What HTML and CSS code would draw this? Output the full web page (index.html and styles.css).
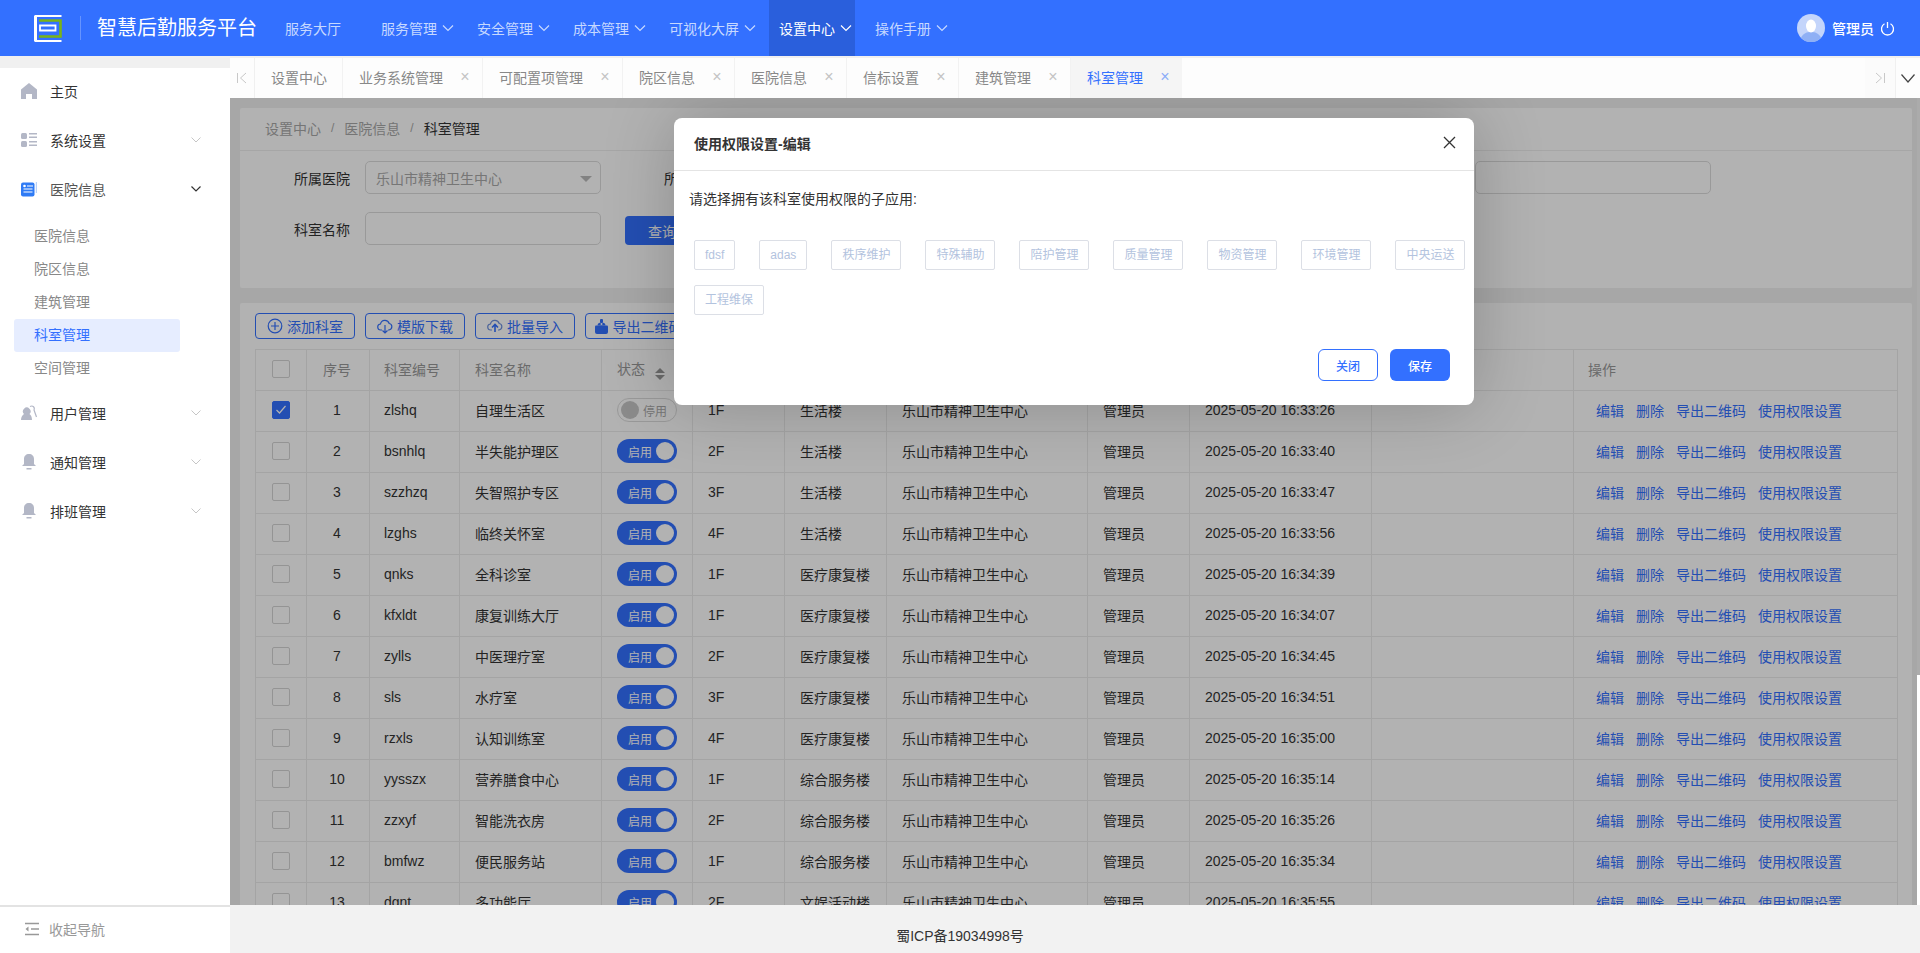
FILE: index.html
```html
<!DOCTYPE html>
<html lang="zh">
<head>
<meta charset="utf-8">
<title>智慧后勤服务平台</title>
<link rel="stylesheet" href="styles.css">
</head>
<body>
<div class="app">
  <header class="topbar">
    <div class="logo">
      <svg width="28" height="27" viewBox="0 0 28 27"><path d="M27.500 1H1.500v25h26" fill="none" stroke="#fff" stroke-width="2"/><path d="M1.500 1v25" stroke="#fff" stroke-width="3" fill="none"/><path d="M5 5.500h21.500v16H5" fill="none" stroke="#7ab317" stroke-width="2.600"/><path d="M6 10.500h15.500v5H6z" fill="none" stroke="#fff" stroke-width="1.800"/></svg>
    </div>
    <div class="brand">智慧后勤服务平台</div>
    <nav class="nav">
      <a class="nav-item solo">服务大厅</a>
      <a class="nav-item">服务管理<svg class="chev" viewBox="0 0 12 12"><path d="M1 3.500l5 5 5-5"/></svg></a>
      <a class="nav-item">安全管理<svg class="chev" viewBox="0 0 12 12"><path d="M1 3.500l5 5 5-5"/></svg></a>
      <a class="nav-item">成本管理<svg class="chev" viewBox="0 0 12 12"><path d="M1 3.500l5 5 5-5"/></svg></a>
      <a class="nav-item">可视化大屏<svg class="chev" viewBox="0 0 12 12"><path d="M1 3.500l5 5 5-5"/></svg></a>
      <a class="nav-item active">设置中心<svg class="chev" viewBox="0 0 12 12"><path d="M1 3.500l5 5 5-5"/></svg></a>
      <a class="nav-item">操作手册<svg class="chev" viewBox="0 0 12 12"><path d="M1 3.500l5 5 5-5"/></svg></a>
    </nav>
    <div class="user">
      <svg class="avatar" width="28" height="28" viewBox="0 0 28 28"><circle cx="14" cy="14" r="14" fill="#c4d5fb"/><path d="M4 24c2-5 6-6 10-6s8 1 10 6a14 14 0 0 1-20 0z" fill="#8fb0f5"/><ellipse cx="14" cy="12" rx="5" ry="6.500" fill="#fff"/></svg>
      <span class="user-name">管理员</span>
      <svg class="power" width="15" height="15" viewBox="0 0 15 15"><path d="M4.500 2.800a6 6 0 1 0 6 0M7.500 1v6" fill="none" stroke="#fff" stroke-width="1.300"/></svg>
    </div>
  </header>

  <div class="below">
    <aside class="sidebar">
      <div class="menu">
        <div class="menu-row"><svg class="m-ico" viewBox="0 0 16 16"><path d="M8 0l8 6.500V16h-5v-5H5v5H0V6.500z" fill="#b3b7c6"/></svg><span>主页</span></div>
        <div class="menu-row"><svg class="m-ico" viewBox="0 0 16 16"><g fill="#b3b7c6"><rect x="0" y="1" width="6" height="6" rx="1.500"/><rect x="0" y="9" width="6" height="6" rx="1.500"/><rect x="8" y="1" width="8" height="1.500"/><rect x="8" y="4.500" width="8" height="1.500"/><rect x="8" y="9" width="8" height="1.500"/><rect x="8" y="12.500" width="8" height="1.500"/></g></svg><span>系统设置</span><svg class="m-chev" viewBox="0 0 10 6"><path d="M.5.500L5 5 9.500.500"/></svg></div>
        <div class="menu-row open"><svg class="m-ico" viewBox="0 0 16 16"><rect x="0" y="1.500" width="13.500" height="14" rx="2" fill="#2f7bf5"/><path d="M15.300 1v11" stroke="#a8c6f7" fill="none"/><path d="M6 5h6M2.500 8h9M2.500 11h9" stroke="#fff" stroke-width="1.200" fill="none"/><circle cx="3.500" cy="5" r="1.300" fill="#fff"/></svg><span>医院信息</span><svg class="m-chev" viewBox="0 0 10 6"><path d="M.5.500L5 5 9.500.500"/></svg></div>
        <div class="submenu">
          <a class="sub">医院信息</a>
          <a class="sub">院区信息</a>
          <a class="sub">建筑管理</a>
          <a class="sub current">科室管理</a>
          <a class="sub">空间管理</a>
        </div>
        <div class="menu-row"><svg class="m-ico" viewBox="0 0 16 16"><path d="M0 15c0-3 1.500-5 3-6a3.800 3.800 0 1 1 5.500 0c1.500 1 2.500 3 2.500 6z" fill="#b3b7c6"/><path d="M9 1.500c3-1.500 5 1 4 3.500l2.500 7" fill="none" stroke="#b3b7c6" stroke-width="1.200"/></svg><span>用户管理</span><svg class="m-chev" viewBox="0 0 10 6"><path d="M.5.500L5 5 9.500.500"/></svg></div>
        <div class="menu-row"><svg class="m-ico" viewBox="0 0 16 16"><path d="M8 0c3 0 5 2 5 5v5l2 2H1l2-2V5c0-3 2-5 5-5z" fill="#b3b7c6"/><rect x="5.500" y="14" width="5" height="1.500" fill="#b3b7c6"/></svg><span>通知管理</span><svg class="m-chev" viewBox="0 0 10 6"><path d="M.5.500L5 5 9.500.500"/></svg></div>
        <div class="menu-row"><svg class="m-ico" viewBox="0 0 16 16"><path d="M8 0c3 0 5 2 5 5v5l2 2H1l2-2V5c0-3 2-5 5-5z" fill="#b3b7c6"/><rect x="5.500" y="14" width="5" height="1.500" fill="#b3b7c6"/></svg><span>排班管理</span><svg class="m-chev" viewBox="0 0 10 6"><path d="M.5.500L5 5 9.500.500"/></svg></div>
      </div>
      <div class="collapse">
        <svg width="16" height="14" viewBox="0 0 16 14"><path d="M1 1.500h14M7 7h8M1 12.500h14" stroke="#999" stroke-width="1.500" fill="none"/><path d="M4.500 4.500L1.500 7l3 2.500z" fill="#999"/></svg>
        <span>收起导航</span>
      </div>
    </aside>

    <main class="main">
      <div class="tabs">
        <div class="tab-btn first"><svg width="12" height="12" viewBox="0 0 12 12"><path d="M1.500 1v10M10 1L4.500 6l5.500 5" fill="none" stroke="#c8c8c8"/></svg></div>
        <a class="tab">设置中心</a>
        <a class="tab">业务系统管理<i class="x">×</i></a>
        <a class="tab">可配置项管理<i class="x">×</i></a>
        <a class="tab">院区信息<i class="x">×</i></a>
        <a class="tab">医院信息<i class="x">×</i></a>
        <a class="tab">信标设置<i class="x">×</i></a>
        <a class="tab">建筑管理<i class="x">×</i></a>
        <a class="tab on">科室管理<i class="x">×</i></a>
        <div class="tabs-right">
          <div class="tab-btn next"><svg width="12" height="12" viewBox="0 0 12 12"><path d="M10.500 1v10M2 1l5.500 5L2 11" fill="none" stroke="#c8c8c8"/></svg></div>
          <div class="tab-btn more"><svg width="14" height="9" viewBox="0 0 14 9"><path d="M.5.500L7 8 13.500.500" fill="none" stroke="#444" stroke-width="1.200"/></svg></div>
        </div>
      </div>

      <div class="stage">
        <div class="content">
          <section class="card filter">
            <div class="crumbs"><span>设置中心</span><i>/</i><span>医院信息</span><i>/</i><b>科室管理</b></div>
            <div class="fields">
              <label class="field"><span class="lbl">所属医院</span><span class="input select">乐山市精神卫生中心<em class="caret"></em></span></label>
              <label class="field"><span class="lbl">所属院区</span><span class="input"></span></label>
              <label class="field"><span class="lbl">所属建筑</span><span class="input"></span></label>
              <label class="field"><span class="lbl">科室编号</span><span class="input"></span></label>
              <label class="field"><span class="lbl">科室名称</span><span class="input"></span></label>
              <div class="query-cell"><button class="query">查询</button></div>
            </div>
          </section>

          <section class="card list">
            <div class="toolbar">
              <button class="tool"><svg width="16" height="16" viewBox="0 0 16 16"><circle cx="8" cy="8" r="6.800" fill="none" stroke="#3370ff" stroke-width="1.200"/><path d="M8 4v8M4 8h8" stroke="#3370ff" stroke-width="1.200"/></svg>添加科室</button>
              <button class="tool"><svg width="16" height="16" viewBox="0 0 16 16"><path d="M5 12H4a3 3 0 0 1-.5-6A4.500 4.500 0 0 1 12.200 5.500 3.300 3.300 0 0 1 12 12h-1" fill="none" stroke="#3370ff" stroke-width="1.200"/><path d="M8 7v8M5.500 12.500L8 15l2.500-2.500" fill="none" stroke="#3370ff" stroke-width="1.200"/></svg>模版下载</button>
              <button class="tool"><svg width="16" height="16" viewBox="0 0 16 16"><path d="M5 12H4a3 3 0 0 1-.5-6A4.500 4.500 0 0 1 12.200 5.500 3.300 3.300 0 0 1 12 12h-1" fill="none" stroke="#6e90dd" stroke-width="1.200"/><path d="M8 14V7M5 9.500L8 6.500l3 3" fill="none" stroke="#3370ff" stroke-width="1.600"/></svg>批量导入</button>
              <button class="tool wide"><svg width="15" height="15" viewBox="0 0 15 15"><path d="M1 7.500q0-1 1-1h11q1 0 1 1V13q0 2-2 2H3q-2 0-2-2z" fill="#3370ff"/><path d="M3.500 6.500q0-3 4-3t4 3z" fill="#3370ff"/><rect x="6" y="0" width="3" height="4" rx="1" fill="#3370ff"/><circle cx="7.500" cy="5" r="1" fill="#fff"/></svg>导出二维码</button>
            </div>
            <table class="grid">
              <colgroup><col class="c1"><col class="c2"><col class="c3"><col class="c4"><col class="c5"><col class="c6"><col class="c7"><col class="c8"><col class="c9"><col class="c10"><col class="c11"><col class="c12"></colgroup>
              <thead>
                <tr><th class="mid"><span class="cb"></span></th><th class="mid">序号</th><th class="code">科室编号</th><th>科室名称</th><th>状态<span class="sort"><i></i><i></i></span></th><th>楼层</th><th>建筑</th><th>所属医院</th><th>创建人</th><th>创建时间</th><th>备注</th><th class="op-head">操作</th></tr>
              </thead>
              <tbody>
                <tr><td class="mid"><span class="cb on"><svg width="12" height="10" viewBox="0 0 12 10"><path d="M1.500 5l3 3 6-7" fill="none" stroke="#fff" stroke-width="1.200"/></svg></span></td><td class="mid">1</td><td class="code">zlshq</td><td>自理生活区</td><td><span class="sw off"><em></em>停用</span></td><td>1F</td><td>生活楼</td><td>乐山市精神卫生中心</td><td>管理员</td><td>2025-05-20 16:33:26</td><td></td><td class="ops"><a>编辑</a><a>删除</a><a>导出二维码</a><a>使用权限设置</a></td></tr>
                <tr><td class="mid"><span class="cb"></span></td><td class="mid">2</td><td class="code">bsnhlq</td><td>半失能护理区</td><td><span class="sw">启用<em></em></span></td><td>2F</td><td>生活楼</td><td>乐山市精神卫生中心</td><td>管理员</td><td>2025-05-20 16:33:40</td><td></td><td class="ops"><a>编辑</a><a>删除</a><a>导出二维码</a><a>使用权限设置</a></td></tr>
                <tr><td class="mid"><span class="cb"></span></td><td class="mid">3</td><td class="code">szzhzq</td><td>失智照护专区</td><td><span class="sw">启用<em></em></span></td><td>3F</td><td>生活楼</td><td>乐山市精神卫生中心</td><td>管理员</td><td>2025-05-20 16:33:47</td><td></td><td class="ops"><a>编辑</a><a>删除</a><a>导出二维码</a><a>使用权限设置</a></td></tr>
                <tr><td class="mid"><span class="cb"></span></td><td class="mid">4</td><td class="code">lzghs</td><td>临终关怀室</td><td><span class="sw">启用<em></em></span></td><td>4F</td><td>生活楼</td><td>乐山市精神卫生中心</td><td>管理员</td><td>2025-05-20 16:33:56</td><td></td><td class="ops"><a>编辑</a><a>删除</a><a>导出二维码</a><a>使用权限设置</a></td></tr>
                <tr><td class="mid"><span class="cb"></span></td><td class="mid">5</td><td class="code">qnks</td><td>全科诊室</td><td><span class="sw">启用<em></em></span></td><td>1F</td><td>医疗康复楼</td><td>乐山市精神卫生中心</td><td>管理员</td><td>2025-05-20 16:34:39</td><td></td><td class="ops"><a>编辑</a><a>删除</a><a>导出二维码</a><a>使用权限设置</a></td></tr>
                <tr><td class="mid"><span class="cb"></span></td><td class="mid">6</td><td class="code">kfxldt</td><td>康复训练大厅</td><td><span class="sw">启用<em></em></span></td><td>1F</td><td>医疗康复楼</td><td>乐山市精神卫生中心</td><td>管理员</td><td>2025-05-20 16:34:07</td><td></td><td class="ops"><a>编辑</a><a>删除</a><a>导出二维码</a><a>使用权限设置</a></td></tr>
                <tr><td class="mid"><span class="cb"></span></td><td class="mid">7</td><td class="code">zylls</td><td>中医理疗室</td><td><span class="sw">启用<em></em></span></td><td>2F</td><td>医疗康复楼</td><td>乐山市精神卫生中心</td><td>管理员</td><td>2025-05-20 16:34:45</td><td></td><td class="ops"><a>编辑</a><a>删除</a><a>导出二维码</a><a>使用权限设置</a></td></tr>
                <tr><td class="mid"><span class="cb"></span></td><td class="mid">8</td><td class="code">sls</td><td>水疗室</td><td><span class="sw">启用<em></em></span></td><td>3F</td><td>医疗康复楼</td><td>乐山市精神卫生中心</td><td>管理员</td><td>2025-05-20 16:34:51</td><td></td><td class="ops"><a>编辑</a><a>删除</a><a>导出二维码</a><a>使用权限设置</a></td></tr>
                <tr><td class="mid"><span class="cb"></span></td><td class="mid">9</td><td class="code">rzxls</td><td>认知训练室</td><td><span class="sw">启用<em></em></span></td><td>4F</td><td>医疗康复楼</td><td>乐山市精神卫生中心</td><td>管理员</td><td>2025-05-20 16:35:00</td><td></td><td class="ops"><a>编辑</a><a>删除</a><a>导出二维码</a><a>使用权限设置</a></td></tr>
                <tr><td class="mid"><span class="cb"></span></td><td class="mid">10</td><td class="code">yysszx</td><td>营养膳食中心</td><td><span class="sw">启用<em></em></span></td><td>1F</td><td>综合服务楼</td><td>乐山市精神卫生中心</td><td>管理员</td><td>2025-05-20 16:35:14</td><td></td><td class="ops"><a>编辑</a><a>删除</a><a>导出二维码</a><a>使用权限设置</a></td></tr>
                <tr><td class="mid"><span class="cb"></span></td><td class="mid">11</td><td class="code">zzxyf</td><td>智能洗衣房</td><td><span class="sw">启用<em></em></span></td><td>2F</td><td>综合服务楼</td><td>乐山市精神卫生中心</td><td>管理员</td><td>2025-05-20 16:35:26</td><td></td><td class="ops"><a>编辑</a><a>删除</a><a>导出二维码</a><a>使用权限设置</a></td></tr>
                <tr><td class="mid"><span class="cb"></span></td><td class="mid">12</td><td class="code">bmfwz</td><td>便民服务站</td><td><span class="sw">启用<em></em></span></td><td>1F</td><td>综合服务楼</td><td>乐山市精神卫生中心</td><td>管理员</td><td>2025-05-20 16:35:34</td><td></td><td class="ops"><a>编辑</a><a>删除</a><a>导出二维码</a><a>使用权限设置</a></td></tr>
                <tr><td class="mid"><span class="cb"></span></td><td class="mid">13</td><td class="code">dgnt</td><td>多功能厅</td><td><span class="sw">启用<em></em></span></td><td>2F</td><td>文娱活动楼</td><td>乐山市精神卫生中心</td><td>管理员</td><td>2025-05-20 16:35:55</td><td></td><td class="ops"><a>编辑</a><a>删除</a><a>导出二维码</a><a>使用权限设置</a></td></tr>
              </tbody>
            </table>
          </section>
        </div>

        <div class="track"><div class="thumb"></div></div>
        <div class="mask"></div>

        <div class="modal">
          <div class="modal-head">
            <span class="modal-title">使用权限设置-编辑</span>
            <svg class="modal-x" width="13" height="13" viewBox="0 0 13 13"><path d="M1 1l11 11M12 1L1 12" fill="none" stroke="#333" stroke-width="1.300"/></svg>
          </div>
          <p class="modal-tip">请选择拥有该科室使用权限的子应用:</p>
          <div class="chips">
            <span class="chip">fdsf</span><span class="chip">adas</span><span class="chip">秩序维护</span><span class="chip">特殊辅助</span><span class="chip">陪护管理</span><span class="chip">质量管理</span><span class="chip">物资管理</span><span class="chip">环境管理</span><span class="chip">中央运送</span><span class="chip">工程维保</span>
          </div>
          <div class="modal-foot">
            <button class="btn ghost">关闭</button>
            <button class="btn solid">保存</button>
          </div>
        </div>
      </div>

      <footer class="icp">蜀ICP备19034998号</footer>
    </main>
  </div>
</div>
</body>
</html>
```

FILE: styles.css
```css
* { box-sizing: border-box; }
html, body { margin: 0; height: 100%; overflow: hidden; }
body { font-family: "Liberation Sans", "Noto Sans CJK SC", sans-serif; font-size: 14px; color: #333; background: #f0f0f0; }
a { text-decoration: none; color: inherit; }
button { font-family: inherit; cursor: pointer; }

.app { height: 953px; display: flex; flex-direction: column; }

/* top bar */
.topbar { height: 56px; flex: none; background: #3370ff; display: flex; align-items: center; color: #fff; }
.logo { width: 80px; padding-left: 34px; height: 27px; display: flex; align-items: center; margin-top: 1px; }
.logo svg { display: block; flex: none; }
.brand { height: 24px; line-height: 24px; border-left: 1px solid rgba(255,255,255,.25); padding-left: 16px; font-size: 20px; width: 195px; white-space: nowrap; }
.nav { display: flex; height: 56px; gap: 10px; }
.nav-item { display: flex; align-items: center; padding: 0 10px; gap: 5px; color: #c7d9ff; width: 86px; white-space: nowrap; }
.nav-item:nth-child(5) { width: 100px; }
.nav-item.solo { margin-right: 10px; width: 76px; }
.nav-item.active { background: #2a5fdc; color: #fff; }
.chev { width: 12px; height: 12px; flex: none; fill: none; stroke: currentColor; stroke-width: 1.200; }
.user { margin-left: auto; display: flex; align-items: center; padding-right: 25px; }
.avatar { display: block; }
.user-name { margin-left: 7px; margin-right: 6px; font-size: 14px; font-weight: 500; }
.power { display: block; }

/* below */
.below { flex: 1; display: flex; min-height: 0; }

/* sidebar */
.sidebar { width: 230px; flex: none; margin-top: 12px; background: #fff; display: flex; flex-direction: column; position: relative; }
.menu { flex: 1; margin-top: -2px; }
.menu-row { height: 49px; display: flex; align-items: center; padding-left: 21px; position: relative; color: #333; }
.menu-row.open { color: #555; }
.m-ico { width: 16px; height: 16px; margin-right: 13px; flex: none; }
.m-chev { width: 10px; height: 6px; position: absolute; left: 191px; top: 22px; fill: none; stroke: #c6c6c6; stroke-width: 1; }
.open .m-chev { stroke: #333; stroke-width: 1.200; }
.submenu { padding: 7px 0 3px; }
.sub { display: block; width: 166px; height: 33px; line-height: 33px; margin-left: 14px; padding-left: 20px; color: #888; border-radius: 3px; }
.sub.current { background: #e6edff; color: #3370ff; }
.collapse { height: 48px; border-top: 2px solid #e3e3e3; display: flex; align-items: center; padding: 0 0 2px 24px; gap: 9px; color: #999; flex: none; }

/* main */
.main { flex: 1; min-width: 0; display: flex; flex-direction: column; }
.tabs { height: 40px; margin-top: 2px; flex: none; background: #fdfdfd; display: flex; align-items: stretch; color: #888; }
.tab-btn { display: flex; align-items: center; justify-content: center; width: 25px; }
.tab-btn.first { border-right: 1px solid #f0f0f0; }
.tab { display: flex; align-items: center; padding: 0 11px 2px 16px; border-right: 1px solid #f2f2f2; white-space: nowrap; }
.tab:nth-of-type(1) { padding-right: 15px; }
.tab .x { font-style: normal; width: 12px; margin-left: 16px; font-size: 16px; color: #c4c4c4; text-align: center; line-height: 1; }
.tab.on { background: #f5f5f5; color: #3370ff; border-right: 0; }
.tab.on .x { color: #8cadf8; }
.tabs-right { margin-left: auto; display: flex; }
.tab-btn.next { width: 30px; background: #fbfbfb; }
.tab-btn.more { border-left: 1px solid #f0f0f0; }

/* stage */
.stage { flex: 1; position: relative; overflow: hidden; min-height: 0; background: #f0f0f0; }
.content { padding: 10px 8px 0 10px; }
.card { background: #fff; border-radius: 2px; }
.filter { height: 180px; }
.crumbs { height: 43px; border-bottom: 1px solid #eee; display: flex; align-items: center; padding: 0 0 2px 25px; color: #a8a8a8; }
.crumbs i { font-style: normal; margin: 0 10px; font-size: 12px; }
.crumbs b { font-weight: 400; color: #333; }
.fields { display: grid; grid-template-columns: repeat(4, 370px); row-gap: 18px; padding-top: 10px; }
.field { display: flex; align-items: center; height: 33px; }
.lbl { width: 110px; text-align: right; margin-right: 15px; color: #333; flex: none; }
.input { width: 236px; height: 33px; border: 1px solid #dcdcdc; border-radius: 5px; display: flex; align-items: center; padding: 0 10px; color: #a9a9a9; background: #fff; position: relative; }
.caret { position: absolute; right: 8px; top: 14px; border-style: solid; border-width: 6px 6px 0; border-color: #bbb transparent transparent; }
.query-cell { padding-left: 15px; padding-top: 4px; height: 33px; grid-column: span 3; }
.query { width: 74px; height: 29px; border: 0; border-radius: 4px; background: #3370ff; color: #fff; font-size: 14px; }

.list { margin-top: 15px; padding: 10px 15px 20px; height: 800px; }
.toolbar { display: flex; gap: 10px; }
.tool { width: 100px; height: 26px; background: #fff; border: 1px solid #3370ff; border-radius: 4px; color: #3370ff; font-size: 14px; display: flex; align-items: center; justify-content: center; gap: 4px; padding: 0; }
.tool.wide { width: 110px; padding-right: 4px; }
.tool svg { flex: none; }

table.grid { margin-top: 10px; width: 1642px; border-collapse: collapse; table-layout: fixed; }
.c1 { width: 51px; } .c2 { width: 63px; } .c3 { width: 90px; } .c4 { width: 142px; } .c5 { width: 91px; } .c6 { width: 92px; }
.c7 { width: 102px; } .c8 { width: 201px; } .c9 { width: 102px; } .c10 { width: 182px; } .c11 { width: 202px; } .c12 { width: 324px; }
.grid th, .grid td { border: 1px solid #ebebeb; padding: 0 15px 2px; text-align: left; font-weight: 400; white-space: nowrap; overflow: hidden; }
.grid th { height: 41px; color: #999; }
.grid td { height: 41px; color: #333; }
.grid .mid { text-align: center; padding: 0 0 2px; }
.grid .mid + .mid { padding-right: 2px; }
.grid .code { padding-left: 14px; }
.grid .op-head { padding-left: 14px; }
.cb { display: inline-block; width: 18px; height: 18px; border: 1px solid #d4d4d4; border-radius: 2px; vertical-align: middle; background: #fff; }
.cb.on { background: #3370ff; border-color: #3370ff; position: relative; }
.cb.on svg { position: absolute; left: 2px; top: 3px; }
.sort { display: inline-flex; flex-direction: column; gap: 2px; margin-left: 10px; vertical-align: 1px; }
.sort i { border-style: solid; border-width: 0 5px 5px; border-color: transparent transparent #999; }
.sort i + i { border-width: 5px 5px 0; border-color: #999 transparent transparent; }
.sw { width: 60px; height: 24px; border-radius: 12px; background: #3370ff; color: #fff; font-size: 12px; display: flex; align-items: center; justify-content: flex-end; gap: 4px; padding: 0 3px; }
.sw em { width: 18px; height: 18px; border-radius: 50%; background: #fff; flex: none; }
.sw.off { background: #fff; border: 1px solid #dcdcdc; color: #aaa; justify-content: flex-start; padding: 0 3px; }
.sw.off em { background: #c8c8c8; }
.grid td.ops { padding-left: 22px; }
.ops a { color: #3370ff; margin-right: 12px; }

.track { position: absolute; right: 0; top: 0; bottom: 0; width: 3px; background: #f5f5f5; }
.thumb { position: absolute; left: 0; right: 0; top: 577px; bottom: 0; background: #fff; z-index: 3; }
.mask { position: absolute; inset: 0; background: rgba(0,0,0,.3); z-index: 2; }

/* modal */
.modal { position: absolute; left: 444px; top: 20px; width: 800px; background: #fff; border-radius: 8px; z-index: 4; box-shadow: 0 0 70px rgba(0,0,0,.22); padding-bottom: 24px; }
.modal-head { height: 53px; border-bottom: 1px solid #e4e4e4; display: flex; align-items: center; padding: 0 18px 2px 20px; }
.modal-title { font-size: 14px; font-weight: 700; color: #333; }
.modal-x { margin-left: auto; margin-top: -2px; display: block; }
.modal-tip { margin: 18px 0 0 15px; line-height: 20px; color: #333; }
.chips { display: flex; flex-wrap: wrap; gap: 15px 24px; margin-top: 31px; padding: 0 8px 0 20px; }
.chip { height: 30px; line-height: 28px; padding: 0 10px; border: 1px solid #dcdfe6; font-size: 12px; color: #b3c3de; border-radius: 2px; }
.modal-foot { display: flex; justify-content: flex-end; gap: 12px; margin-top: 34px; padding-right: 24px; }
.btn { width: 60px; height: 32px; border-radius: 6px; font-size: 12px; font-weight: 500; }
.btn.ghost { background: #fff; border: 1px solid #3370ff; color: #3370ff; }
.btn.solid { background: #3370ff; border: 0; color: #fff; }

.icp { height: 48px; flex: none; background: #f2f2f2; text-align: center; padding: 22px 230px 0 0; line-height: 18px; color: #333; position: relative; z-index: 5; }
```
